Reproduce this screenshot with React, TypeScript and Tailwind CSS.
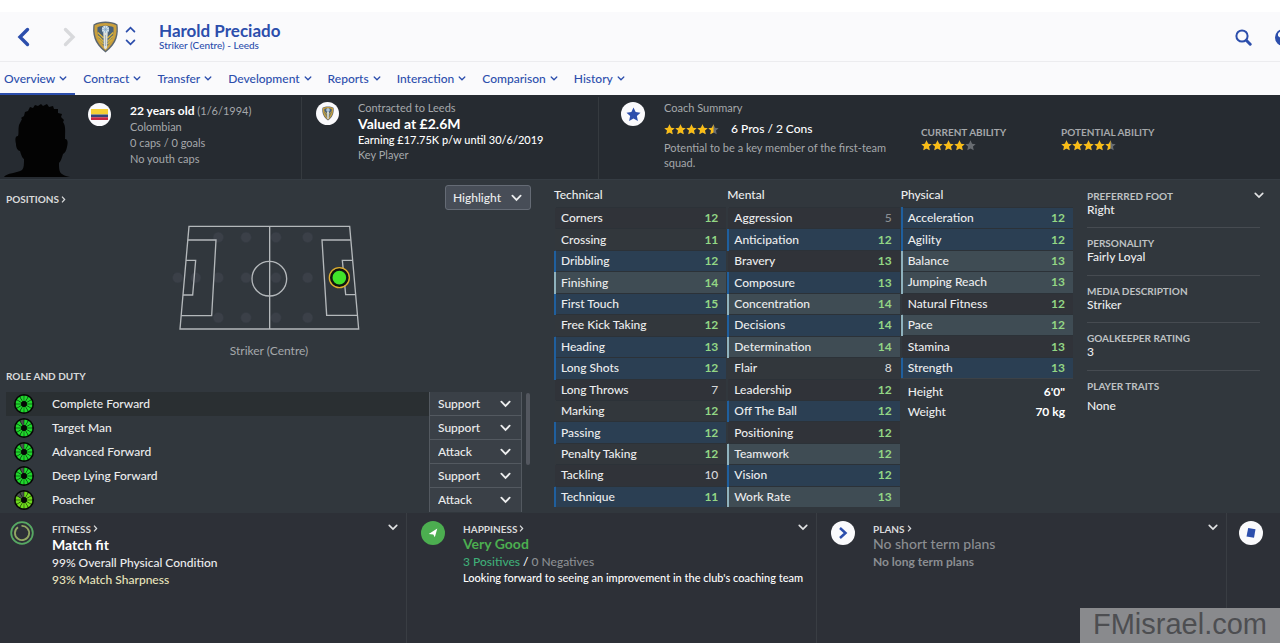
import { ReactNode } from 'react'
import clsx from 'clsx'

type Tone = 'key' | 'preferred' | null
type Attribute = [name: string, value: number, tone: Tone]

const tabs = ['Overview', 'Contract', 'Transfer', 'Development', 'Reports', 'Interaction', 'Comparison', 'History']

const technical: Attribute[] = [
  ['Corners', 12, null],
  ['Crossing', 11, null],
  ['Dribbling', 12, 'key'],
  ['Finishing', 14, 'preferred'],
  ['First Touch', 15, 'key'],
  ['Free Kick Taking', 12, null],
  ['Heading', 13, 'key'],
  ['Long Shots', 12, 'key'],
  ['Long Throws', 7, null],
  ['Marking', 12, null],
  ['Passing', 12, 'key'],
  ['Penalty Taking', 12, null],
  ['Tackling', 10, null],
  ['Technique', 11, 'key'],
]

const mental: Attribute[] = [
  ['Aggression', 5, null],
  ['Anticipation', 12, 'key'],
  ['Bravery', 13, null],
  ['Composure', 13, 'key'],
  ['Concentration', 14, 'preferred'],
  ['Decisions', 14, 'key'],
  ['Determination', 14, 'preferred'],
  ['Flair', 8, null],
  ['Leadership', 12, null],
  ['Off The Ball', 12, 'key'],
  ['Positioning', 12, null],
  ['Teamwork', 12, 'preferred'],
  ['Vision', 12, 'key'],
  ['Work Rate', 13, 'preferred'],
]

const physical: Attribute[] = [
  ['Acceleration', 12, 'key'],
  ['Agility', 12, 'key'],
  ['Balance', 13, 'preferred'],
  ['Jumping Reach', 13, 'preferred'],
  ['Natural Fitness', 12, null],
  ['Pace', 12, 'preferred'],
  ['Stamina', 13, null],
  ['Strength', 13, 'key'],
]

// filled = number of lit segments out of 12
const roles = [
  { name: 'Complete Forward', duty: 'Support', filled: 12, color: '#1fd82c' },
  { name: 'Target Man', duty: 'Support', filled: 11, color: '#1fd82c' },
  { name: 'Advanced Forward', duty: 'Attack', filled: 11, color: '#1fd82c' },
  { name: 'Deep Lying Forward', duty: 'Support', filled: 11, color: '#1fd82c' },
  { name: 'Poacher', duty: 'Attack', filled: 10, color: '#6fdc1c' },
]

const facts = [
  ['Preferred Foot', 'Right'],
  ['Personality', 'Fairly Loyal'],
  ['Media Description', 'Striker'],
  ['Goalkeeper Rating', '3'],
  ['Player Traits', 'None'],
]

function valueColor(v: number) {
  if (v > 10) return 'font-bold text-[#93d685]'
  if (v > 5) return 'font-medium text-[#d5d7d9]'
  return 'font-medium text-[#8b8f93]'
}

function Chevron({ className, up, width = 2 }: { className?: string; up?: boolean; width?: number }) {
  return (
    <svg viewBox="0 0 12 8" className={clsx('fill-none stroke-current', className)} strokeWidth={width} strokeLinecap="round" aria-hidden="true">
      <path d={up ? 'M1.5 6.5 6 2l4.5 4.5' : 'M1.5 1.5 6 6l4.5-4.5'} />
    </svg>
  )
}

function Caret() {
  return (
    <svg viewBox="0 0 5 8" className="ml-[2px] h-[7px] w-[5px] fill-none stroke-current" strokeWidth="1.4" aria-hidden="true">
      <path d="m.8.8 3 3.2-3 3.2" />
    </svg>
  )
}

function Crest({ className }: { className?: string }) {
  return (
    <svg viewBox="0 0 26 32" className={className} role="img" aria-label="Leeds crest">
      <path d="M13 .6C8.5.6 4.5 1.6 1 3.4-.2 12 .8 22.5 13 31.4 25.2 22.5 26.2 12 25 3.4 21.5 1.6 17.5.6 13 .6Z" fill="#5b6670" />
      <path d="M13 1.9C9 1.9 5.3 2.7 2.2 4.3 1.3 12 2.5 21.5 13 29.8 23.5 21.5 24.7 12 23.8 4.3 20.7 2.7 17 1.9 13 1.9Z" fill="#c99f3c" />
      <path d="M13 4.7c-3.300 0-6 .5-8 1.500C4.500 13 6 20.200 13 26.800c7-6.600 8.500-13.600 8-20.600C19 5.200 16.300 4.700 13 4.700Z" fill="#496178" />
      <path d="M5.500 15 11 20.500M6.500 18.500l4.500 4.500M5.300 11.500l5.700 5.500M20.500 15 15 20.500M19.500 18.500 15 23M20.700 11.500 15 17" stroke="#d8b23c" strokeWidth="1.500" fill="none" />
      <path d="M10.800 12h4.400l-.6 15-1.600 1.600-1.600-1.600Z" fill="#dfe1da" />
      <path d="M13 14v11" stroke="#9aa9b3" strokeWidth=".8" />
      <circle cx="13" cy="8.400" r="3.600" fill="#d5e3ec" />
      <path d="M13 5v6.800M9.600 8.400h6.800M10.600 6l4.800 4.800M15.400 6l-4.800 4.800" stroke="#7ba2c2" strokeWidth=".6" />
    </svg>
  )
}

const STAR = 'M6 .4 7.700 4l3.900.5-2.900 2.700.8 3.900L6 9.200l-3.500 1.900.8-3.900L.4 4.500 4.300 4Z'

function Stars({ value }: { value: number }) {
  return (
    <span className="flex" role="img" aria-label={`${value} out of 5 stars`}>
      {[0, 1, 2, 3, 4].map((i) => (
        <svg key={i} viewBox="0 0 12 12" className="size-[11px]">
          <path d={STAR} fill="#686c71" />
          {value - i >= 1 && <path d={STAR} fill="#f9bd16" />}
          {value - i === 0.5 && <path d="M6 .4V9.200L2.500 11.100l.8-3.900L.4 4.500 4.300 4Z" fill="#f9bd16" />}
        </svg>
      ))}
    </span>
  )
}

function Badge({ children, className = 'size-6 bg-[#fafafc]' }: { children: ReactNode; className?: string }) {
  return (
    <span className={clsx('flex shrink-0 items-center justify-center rounded-full', className)}>
      {children}
    </span>
  )
}

function Silhouette() {
  return (
    <svg viewBox="0 0 70 76" className="h-[76px] w-[70px]" role="img" aria-label="No player photo">
      <path
        fill="#030303"
        d="M1 76c2-4 14-4 18-7 2-2 2-6 2-11-2-1-3-5-4-8-2 0-4-3-4-7-1-4-1-8 2-8 1-3 0-7 1-11l3-6-1-1 3-2 1-4 3-1 2-4 3 1 2-3 3 1 3-2 2 2 4-2 2 3 4-1 1 3 4 0 0 4 4 1-1 3 3 3-1 2c3 4 2 10 2 17 3 0 3 4 2 8-1 4-2 6-4 7-1 3-2 7-4 9 0 5 0 9 3 11 4 3 10 3 12 4Z"
      />
    </svg>
  )
}

function RoleWheel({ filled, color }: { filled: number; color: string }) {
  return (
    <svg viewBox="-10 -10 20 20" className="size-5 shrink-0" aria-hidden="true">
      <circle r="10" fill="#050805" />
      {Array.from({ length: 12 }, (_, i) => (
        <path
          key={i}
          d="M-.6-3-1.900-8Q0-8.900 1.900-8L.6-3Z"
          transform={`rotate(${15 + i * 30})`}
          fill={i < filled ? color : '#4c5350'}
        />
      ))}
    </svg>
  )
}

function Pitch() {
  const dots = [
    [53, 293], [107, 293],
    [175, 172], [175, 293], [175, 413],
    [258, 172], [258, 293], [258, 413],
    [348, 172], [348, 293], [348, 413],
    [443, 172], [443, 293], [443, 413],
  ]
  return (
    <svg viewBox="36 132 585 321" className="h-[107px] w-[195px]" role="img" aria-label="Positions on the pitch">
      {dots.map(([x, y]) => (
        <circle key={`${x}-${y}`} cx={x} cy={y} r="16" fill="#3b4048" stroke="#343a41" strokeWidth="2" />
      ))}
      <g fill="none" stroke="#b4b8bb" strokeWidth="4">
        <path d="M87 139H569L596 447H60Z" />
        <path d="M329 139V447" />
        <circle cx="328" cy="296" r="52" />
        <path d="M83 180H168L155 407H63M78 241H107L98 345H69M572 180H486L500 406H592M577 241H547L557 344H586" />
      </g>
      <circle cx="538" cy="293" r="25" fill="#40e42a" stroke="#101510" strokeWidth="9" />
      <circle cx="538" cy="293" r="30" fill="none" stroke="#dfae2e" strokeWidth="4" />
    </svg>
  )
}

function AttributeTable({ title, rows, height }: { title: string; rows: Attribute[]; height: string }) {
  return (
    <section>
      <h2 className="flex h-6 items-center font-medium">{title}</h2>
      <table className={clsx('w-full border-collapse', height)}>
        <tbody>
          {rows.map(([name, value, tone], i) => (
            <tr
              key={name}
              className={clsx(
                'border-t border-[#2c3238]',
                tone === 'key' && 'bg-[#2b3f53]',
                tone === 'preferred' && 'bg-[#3f4c54]',
                !tone && (i % 2 === 0 ? 'bg-[#303339]' : 'bg-[#32373c]'),
              )}
            >
              <th
                scope="row"
                className={clsx(
                  'border-l-2 p-0 pl-[5px] text-left font-medium text-[#ecedee]',
                  tone === 'key' && 'border-l-[#1f5f9e]',
                  tone === 'preferred' && 'border-l-[#8fb2bd]',
                  !tone && 'border-l-transparent',
                )}
              >
                {name}
              </th>
              <td className={clsx('p-0 pr-2 text-right', valueColor(value))}>{value}</td>
            </tr>
          ))}
        </tbody>
      </table>
    </section>
  )
}

function Card({ icon, title, children }: { icon: ReactNode; title: string; children: ReactNode }) {
  return (
    <section className="flex gap-[18px] border-r border-[#393d43] pt-2 pr-2 pl-[14px] first:pl-[10px]">
      {icon}
      <div className="min-w-0 flex-1">
        <div className="flex h-[15px] items-center justify-between">
          <h2>
            <a href="#" className="flex items-center text-[10px] font-bold text-[#d9dadb] uppercase">
              {title}
              <Caret />
            </a>
          </h2>
          <button type="button" aria-label={`${title} options`} className="pb-[2px] text-[#e2e3e4]">
            <Chevron className="h-[7px] w-[10px]" />
          </button>
        </div>
        {children}
      </div>
    </section>
  )
}

export default function App() {
  return (
    <div className="flex min-h-screen flex-col overflow-hidden bg-[#2d3037] font-['Lato','Open_Sans',sans-serif] text-[12px] leading-4 text-[#ecedee]">
      <header className="border-t-[12px] border-white bg-[#fafafc] text-[#2c4eac]">
        <div className="flex h-[50px] items-center border-b border-[#ececef] pt-px pl-[17px]">
          <button type="button" aria-label="Back">
            <svg viewBox="0 0 13 20" className="h-5 w-[13px] fill-none stroke-[#2c4eac]" strokeWidth="3.4" strokeLinecap="round">
              <path d="M10.500 2.500 3 10l7.500 7.500" />
            </svg>
          </button>
          <button type="button" aria-label="Forward" className="ml-[33px]">
            <svg viewBox="0 0 13 20" className="h-5 w-[13px] fill-none stroke-[#d8d9dc]" strokeWidth="3.4" strokeLinecap="round">
              <path d="m2.500 2.500 7.500 7.500-7.500 7.500" />
            </svg>
          </button>
          <Crest className="ml-4 h-8 w-[27px]" />
          <div className="ml-[6px] flex flex-col gap-[6px] pb-[2px]">
            <button type="button" aria-label="Previous player">
              <Chevron up className="h-[7px] w-[11px]" />
            </button>
            <button type="button" aria-label="Next player">
              <Chevron className="h-[7px] w-[11px]" />
            </button>
          </div>
          <div className="ml-[23px] pb-[3px]">
            <h1 className="text-[17px] leading-[18px] font-bold">Harold Preciado</h1>
            <p className="text-[10px] leading-[10px] font-medium">Striker (Centre) - Leeds</p>
          </div>
          <button type="button" aria-label="Search" className="ml-auto">
            <svg viewBox="0 0 17 17" className="size-[17px] fill-none stroke-current" strokeLinecap="round">
              <circle cx="7" cy="7" r="5.6" strokeWidth="2" />
              <path d="m11.500 11.500 3.700 3.700" strokeWidth="3" />
            </svg>
          </button>
          <button type="button" aria-label="World" className="-mr-3 ml-[23px]">
            <svg viewBox="0 0 17 17" className="size-[17px]">
              <circle cx="8.5" cy="8.5" r="8.5" fill="#2c4eac" />
              <path d="M3 4.500C4.500 2.500 6 2 8.500 2v4L5 8.500 3 7Z" fill="#fafafc" />
            </svg>
          </button>
        </div>
        <nav className="-ml-1 flex h-[33px]">
          {tabs.map((tab, i) => (
            <a
              key={tab}
              href="#"
              className={clsx('flex items-center gap-1 border-b-2 px-2 pt-[2px] text-[12px] font-medium', i === 0 ? 'border-[#2c4eac]' : 'border-transparent')}
            >
              {tab}
              <Chevron className="h-[5px] w-2" />
            </a>
          ))}
        </nav>
      </header>

      <div className="grid h-[85px] grid-cols-[302fr_297fr_681fr] border-b border-[#353c43] bg-[#262b31] pt-[2px] text-[11px] text-[#a5a8ab]">
        <section className="flex border-r border-[#353a3f]">
          <div className="flex w-[88px] items-end justify-start pb-[2px] pl-[3px]">
            <Silhouette />
          </div>
          <Badge className="mt-[6px] size-[23px] bg-[#fafafc]">
            <svg viewBox="0 0 17 11" className="h-[11px] w-[17px]" role="img" aria-label="Colombia">
              <path d="M0 0h17v5.500H0Z" fill="#f5cf35" />
              <path d="M0 5.500h17v2.750H0Z" fill="#31457c" />
              <path d="M0 8.250h17V11H0Z" fill="#c82845" />
            </svg>
          </Badge>
          <div className="pt-[6px] pl-[19px]">
            <p><span className="text-[12px] font-bold text-white">22 years old</span> (1/6/1994)</p>
            <p>Colombian</p>
            <p>0 caps / 0 goals</p>
            <p>No youth caps</p>
          </div>
        </section>
        <section className="flex border-r border-[#353a3f] pl-[14px]">
          <Badge className="mt-[5px] size-[23px] bg-[#fafafc]">
            <Crest className="h-[15px] w-3" />
          </Badge>
          <div className="pt-[3px] pl-[19px]">
            <p>Contracted to Leeds</p>
            <p className="text-[14px] font-bold text-white">Valued at £2.6M</p>
            <p className="font-medium text-white">Earning £17.75K p/w until 30/6/2019</p>
            <p className="leading-[14px]">Key Player</p>
          </div>
        </section>
        <section className="flex pl-[22px]">
          <Badge className="mt-[5px] size-6 bg-[#fafafc]">
            <svg viewBox="0 0 12 12" className="size-[15px]" aria-hidden="true">
              <path d={STAR} fill="#2c4eac" />
            </svg>
          </Badge>
          <div className="w-[276px] pt-[3px] pl-[19px]">
            <p>Coach Summary</p>
            <div className="flex h-6 items-center gap-3 pt-[2px] text-[12px] font-medium text-white">
              <Stars value={4.5} />
              6 Pros / 2 Cons
            </div>
            <p className="w-[230px] leading-[15px]">Potential to be a key member of the first-team squad.</p>
          </div>
          <div className="w-[140px] pt-[27px]">
            <h2 className="text-[10px] font-bold uppercase">Current Ability</h2>
            <Stars value={4} />
          </div>
          <div className="pt-[27px]">
            <h2 className="text-[10px] font-bold uppercase">Potential Ability</h2>
            <Stars value={4.5} />
          </div>
        </section>
      </div>

      <main className="grid h-[333px] grid-cols-[554fr_519fr_207fr] bg-[#31373d]">
        <div className="flex flex-col pl-[6px]">
          <div className="flex items-start justify-between pt-[5px] pr-[23px]">
            <h2 className="pt-[6px]">
              <a href="#" className="flex items-center text-[10px] font-bold text-[#d9dadb] uppercase">
                Positions
                <Caret />
              </a>
            </h2>
            <div className="relative">
              <select aria-label="Highlight" className="h-[25px] w-[86px] appearance-none rounded-[3px] border border-[#656b75] bg-[#474d57] pl-[7px] font-medium">
                <option>Highlight</option>
              </select>
              <Chevron className="pointer-events-none absolute top-[9px] right-[9px] h-2 w-[11px]" />
            </div>
          </div>
          <figure className="flex flex-col items-center pt-[14px] pr-[22px]">
            <Pitch />
            <figcaption className="pt-3 text-[#a5a8ab]">Striker (Centre)</figcaption>
          </figure>
          <h2 className="mt-[9px] text-[10px] font-bold text-[#d9dadb] uppercase">Role and Duty</h2>
          <div className="mt-2 flex">
            <ul className="w-[516px]">
              {roles.map((role, i) => (
                <li key={role.name} className={clsx('flex h-6 items-center pl-2', i === 0 && 'bg-[#2a2f32]')}>
                  <RoleWheel filled={role.filled} color={role.color} />
                  <span className="flex-1 pl-[18px] font-medium">{role.name}</span>
                  <div className="relative h-6 w-[93px]">
                    <select
                      aria-label={`${role.name} duty`}
                      defaultValue={role.duty}
                      className={clsx(
                        'size-full appearance-none border-x border-[#535960] bg-[#3a4047] pl-2 font-medium',
                        i < roles.length - 1 && 'border-b',
                      )}
                    >
                      <option>Support</option>
                      <option>Attack</option>
                    </select>
                    <Chevron className="pointer-events-none absolute top-2 right-[11px] h-2 w-[11px]" />
                  </div>
                </li>
              ))}
            </ul>
            <div className="mt-px ml-1 h-[72px] w-1 rounded-full bg-[#53575f]" />
          </div>
        </div>

        <div className="grid grid-cols-3 items-start gap-px pt-[3px]">
          <AttributeTable title="Technical" rows={technical} height="h-[300px]" />
          <AttributeTable title="Mental" rows={mental} height="h-[300px]" />
          <div>
            <AttributeTable title="Physical" rows={physical} height="h-[171px]" />
            <dl className="border-t border-[#3d4247] pt-[3px] pr-2 pl-[7px] leading-5 font-medium">
              <div className="flex justify-between">
                <dt>Height</dt>
                <dd className="font-bold text-white">6'0"</dd>
              </div>
              <div className="flex justify-between">
                <dt>Weight</dt>
                <dd className="font-bold text-white">70 kg</dd>
              </div>
            </dl>
          </div>
        </div>

        <div className="relative pr-5 pl-[14px]">
          <dl className="grid h-[237px] grid-rows-5">
            {facts.map(([label, value], i) => (
              <div key={label} className={clsx('border-t pt-2', i > 0 ? 'border-[#464b51]' : 'border-transparent')}>
                <dt className="text-[10px] leading-[14px] font-bold text-[#bfc2c4] uppercase">{label}</dt>
                <dd className={clsx('leading-[14px] font-medium', i === facts.length - 1 && 'pt-[6px]')}>{value}</dd>
              </div>
            ))}
          </dl>
          <button type="button" aria-label="Profile options" className="absolute top-3 right-4 text-[#e2e3e4]">
            <Chevron className="h-[7px] w-[10px]" />
          </button>
        </div>
      </main>

      <footer className="relative grid flex-1 grid-cols-[407fr_410fr_410fr_53fr]">
        <Card
          title="Fitness"
          icon={
            <svg viewBox="0 0 24 24" className="size-6 shrink-0 fill-none" aria-hidden="true">
              <circle cx="12" cy="12" r="10.8" stroke="#57a863" strokeWidth="1.8" />
              <path d="M12 4.900A7.100 7.100 0 1 1 8.400 5.900" stroke="#93a864" strokeWidth="1.8" transform="rotate(-4 12 12)" />
            </svg>
          }
        >
          <p className="text-[14px] leading-[18px] font-bold text-white">Match fit</p>
          <p className="leading-[18px] font-medium">99% Overall Physical Condition</p>
          <p className="font-medium text-[#e9e4bd]">93% Match Sharpness</p>
        </Card>
        <Card
          title="Happiness"
          icon={
            <Badge className="size-6 bg-[#4cae50]">
              <svg viewBox="0 0 10 10" className="size-[10px]" aria-hidden="true">
                <path d="M9.300.5 6.800 9.300 5.300 6.500.7 6Z" fill="#fff" />
              </svg>
            </Badge>
          }
        >
          <p className="text-[14px] font-bold text-[#4cae50]">Very Good</p>
          <p className="leading-5 font-medium text-[#8b8e92]"><span className="text-[#3fae78]">3 Positives</span> <span className="text-white">/</span> 0 Negatives</p>
          <p className="text-[11px] leading-3 font-medium whitespace-nowrap text-white">Looking forward to seeing an improvement in the club's coaching team</p>
        </Card>
        <Card
          title="Plans"
          icon={
            <Badge>
              <svg viewBox="0 0 10 14" className="h-[14px] w-[10px] fill-none stroke-[#2c4eac]" strokeWidth="2.5" aria-hidden="true">
                <path d="m2 2 5.500 5L2 12" />
              </svg>
            </Badge>
          }
        >
          <p className="text-[14px] font-medium text-[#8b8e92]">No short term plans</p>
          <p className="leading-5 font-bold text-[#8b8e92]">No long term plans</p>
        </Card>
        <section className="pt-2 pl-3">
          <Badge>
            <svg viewBox="0 0 12 12" className="size-3" aria-hidden="true">
              <path d="m3.200 1 7.300 1.300-1.500 8.500-7.500-1.300Z" fill="#2c4eac" />
            </svg>
          </Badge>
        </section>
        <p className="absolute right-0 bottom-0 h-[35px] w-[200px] bg-[#898a8d] pl-[13px] font-['Liberation_Sans',Arial,sans-serif] text-[29px] leading-[33px] text-[#4d4e51]">FMisrael.com</p>
      </footer>
    </div>
  )
}
